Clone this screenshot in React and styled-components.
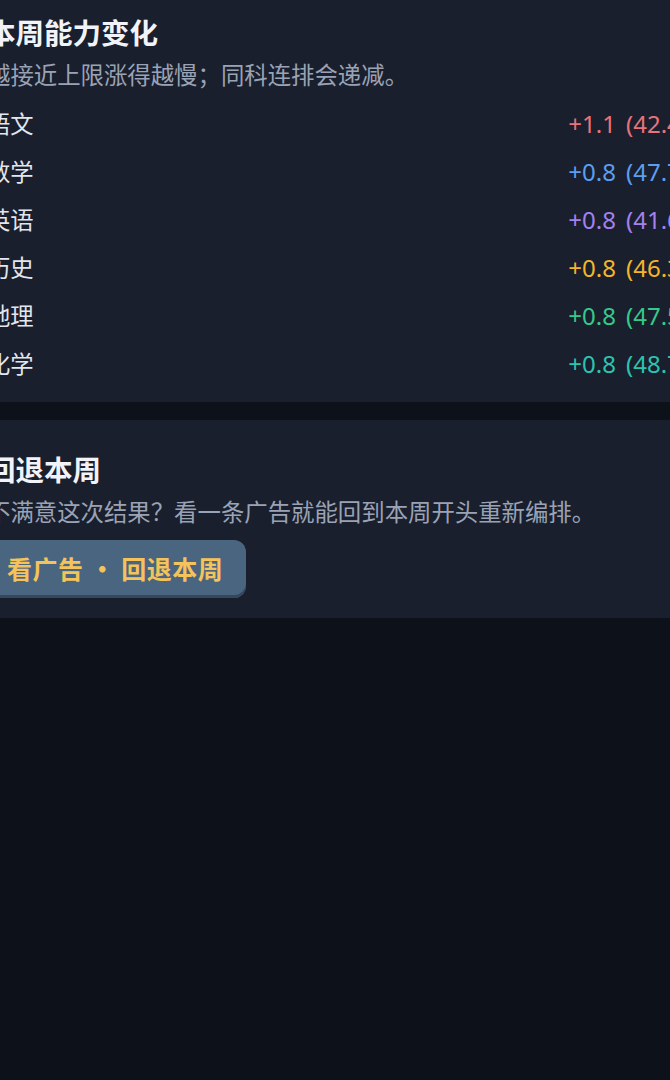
import React from "react";
import styled, { createGlobalStyle } from "styled-components";

const GlobalStyle = createGlobalStyle`
  html, body {
    margin: 0;
    padding: 0;
    background: #0d111a;
    overflow: hidden;
  }
  body {
    font-family: "Noto Sans", "Noto Sans CJK SC", sans-serif;
    color: #e8ebf2;
  }
`;

const Page = styled.div`
  width: 757px;
  margin-left: -41px;
  display: flex;
  flex-direction: column;
  gap: 18px;
`;

const Panel = styled.section`
  background: #1a1f2d;
  padding: ${(p) => p.$pad};
  display: flex;
  flex-direction: column;
`;

const Title = styled.h2`
  margin: 0;
  font-size: 28.5px;
  line-height: 36px;
  font-weight: 700;
  color: #f1f3f8;
`;

const Hint = styled.p`
  margin: 8px 0 0;
  font-size: 23.4px;
  line-height: 32px;
  color: #9aa3b5;
`;

const List = styled.div`
  margin-top: 8px;
  display: flex;
  flex-direction: column;
`;

const Row = styled.div`
  height: 48px;
  display: flex;
  align-items: center;
  justify-content: space-between;
`;

const Subject = styled.span`
  font-size: 23.3px;
  color: #e3e6ee;
`;

const Delta = styled.span`
  display: flex;
  gap: 10px;
  font-size: 24px;
  color: ${(p) => p.$color};
`;

const AdButton = styled.button`
  align-self: flex-start;
  margin-top: 12px;
  height: 58px;
  padding: 0 23px 3px 20px;
  border: none;
  border-radius: 12px;
  background: #4a6580;
  box-shadow: inset 0 -3px 0 #34475c;
  font-family: "Noto Sans CJK SC", sans-serif;
  font-size: 25px;
  letter-spacing: 0.5px;
  font-weight: 700;
  color: #f4c35a;
  cursor: pointer;
`;

const subjects = [
  { name: "语文", delta: "+1.1", value: "42.4", color: "#e8737a" },
  { name: "数学", delta: "+0.8", value: "47.7", color: "#5c9ef0" },
  { name: "英语", delta: "+0.8", value: "41.6", color: "#a481ee" },
  { name: "历史", delta: "+0.8", value: "46.3", color: "#f3b52a" },
  { name: "地理", delta: "+0.8", value: "47.5", color: "#36c98a" },
  { name: "化学", delta: "+0.8", value: "48.7", color: "#2cc4b0" },
];

export default function App() {
  return (
    <>
      <GlobalStyle />
      <Page>
        <Panel $pad="15px 28px 15px">
          <Title>本周能力变化</Title>
          <Hint>越接近上限涨得越慢；同科连排会递减。</Hint>
          <List>
            {subjects.map((s) => (
              <Row key={s.name}>
                <Subject>{s.name}</Subject>
                <Delta $color={s.color}>
                  <span>{s.delta}</span>
                  <span>({s.value})</span>
                </Delta>
              </Row>
            ))}
          </List>
        </Panel>
        <Panel $pad="32px 28px 20px">
          <Title>回退本周</Title>
          <Hint>不满意这次结果？看一条广告就能回到本周开头重新编排。</Hint>
          <AdButton>看广告 · 回退本周</AdButton>
        </Panel>
      </Page>
    </>
  );
}
